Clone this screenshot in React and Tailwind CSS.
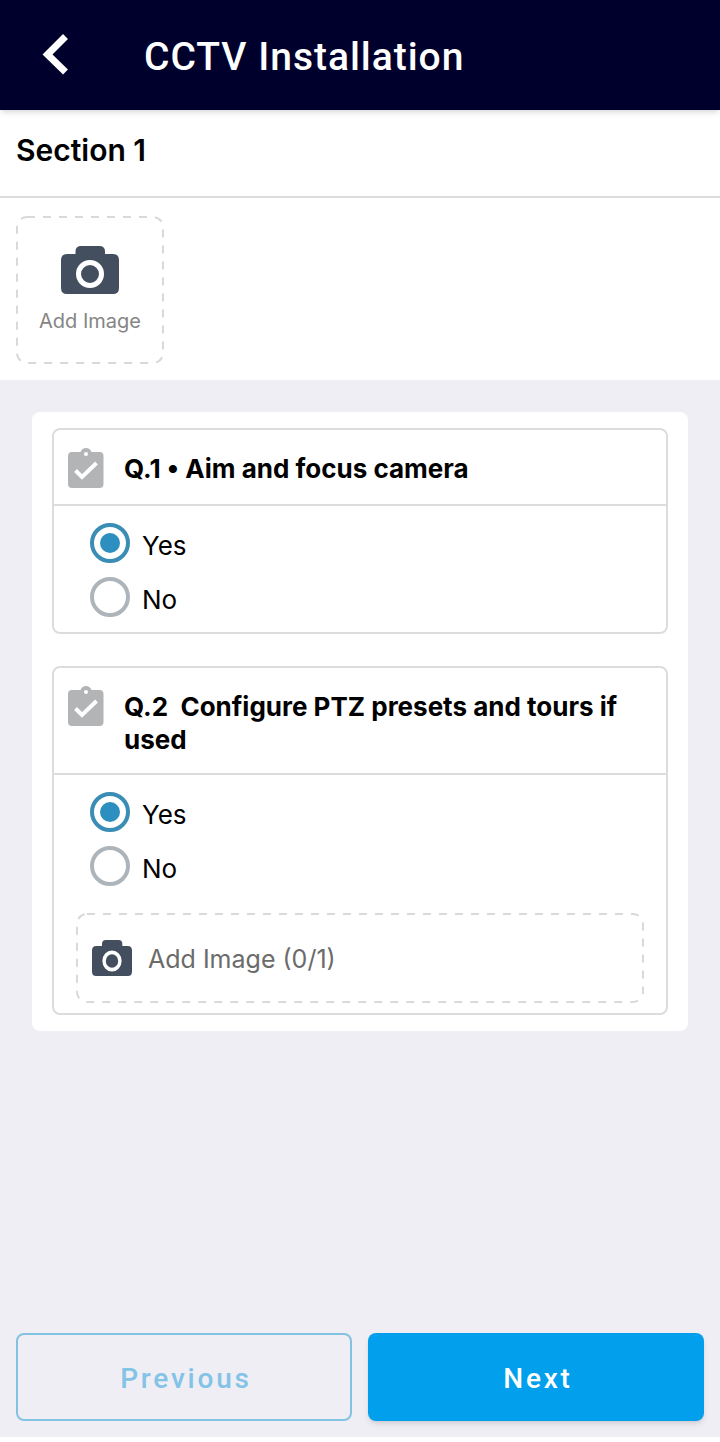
import { useState } from "react";

const questions = [
    { id: "q1", title: "Q.1 • Aim and focus camera", maxImages: 0 },
    { id: "q2", title: "Q.2  Configure PTZ presets and tours if used", maxImages: 1 },
];

function CameraIcon({ className }) {
    return (
        <svg viewBox="0 0 58 48" preserveAspectRatio="none" className={className} aria-hidden="true">
            <path
                fill="#434f5f"
                d="M6 8h8.500V5.500Q14.500 0 20 0h18.500Q44 0 44 5.500V8h8q6 0 6 6v28q0 6-6 6H6q-6 0-6-6V14q0-6 6-6Z"
            />
            <circle cx="29" cy="28" r="11.500" fill="none" stroke="#fff" strokeWidth="5" />
        </svg>
    );
}

function ClipboardIcon() {
    return (
        <svg viewBox="0 0 36 42" className="w-9 h-[42px] shrink-0" aria-hidden="true">
            <path fill="#b2b4b6" d="M4 6h8.500C13.500 3.500 15.500 2 18 2s4.500 1.500 5.500 4H31.500q4 0 4 4v28q0 4-4 4H4q-4 0-4-4V10q0-4 4-4Z" />
            <circle cx="18" cy="8" r="2" fill="#fff" />
            <path fill="none" stroke="#fff" strokeWidth="4" d="m7.500 24.500 6.500 6.500L28.500 17" />
        </svg>
    );
}

function DashedOutline() {
    return (
        <svg className="absolute inset-0 size-full p-px overflow-visible pointer-events-none" aria-hidden="true">
            <rect width="100%" height="100%" rx="10" fill="none" stroke="#d9d9d9" strokeWidth="2" strokeDasharray="8 8" />
        </svg>
    );
}

function Option({ name, value, checked, onChange }) {
    return (
        <label className="flex items-center gap-3 h-[54px]">
            <input
                type="radio"
                name={name}
                value={value}
                checked={checked}
                onChange={onChange}
                className="appearance-none grid place-items-center size-10 rounded-full border-4 border-[#adb5bb] checked:border-[#3a8db5] checked:before:block checked:before:size-5 checked:before:rounded-full checked:before:bg-[#2d8fbf]"
            />
            <span className="pt-1 text-[26px]">{value}</span>
        </label>
    );
}

function Question({ question }) {
    const [answer, setAnswer] = useState("Yes");

    return (
        <section className="border-2 border-[#dcdcdc] rounded-lg">
            <div className="flex items-start gap-5 px-3.5 py-4 border-b-2 border-[#dcdcdc]">
                <ClipboardIcon />
                <h2 className="pt-1.5 pb-px text-[26px] leading-[33px] font-bold whitespace-pre-wrap">{question.title}</h2>
            </div>
            <div className="pt-2.5 pb-2 pl-9">
                {["Yes", "No"].map((value) => (
                    <Option key={value} name={question.id} value={value} checked={answer === value} onChange={() => setAnswer(value)} />
                ))}
            </div>
            {question.maxImages > 0 && (
                <div className="px-[22px] pt-3 pb-2.5">
                    <button type="button" className="relative flex items-center gap-4 w-full h-[90px] px-4 text-[25px] text-[#6b6b6b]">
                        <DashedOutline />
                        <CameraIcon className="w-10 h-9" />
                        <span className="pt-1">Add Image (0/{question.maxImages})</span>
                    </button>
                </div>
            )}
        </section>
    );
}

export default function App() {
    return (
        <div className="flex flex-col min-h-screen bg-[#efeef5] border-b-[5px] border-white font-['Inter',sans-serif] text-black">
            <header className="relative flex items-center h-[110px] px-8 gap-16 bg-[#00002d] text-white shadow-md">
                <button type="button" aria-label="Back" className="size-12 shrink-0">
                    <svg viewBox="0 0 48 48" className="size-full" aria-hidden="true">
                        <path fill="none" stroke="currentColor" strokeWidth="7" d="M33.500 5.500 15.500 23.500l18 17.500" />
                    </svg>
                </button>
                <h1 className="pt-1 font-['Roboto',sans-serif] text-[39px] font-medium tracking-wide">CCTV Installation</h1>
            </header>

            <div className="h-[88px] px-4 pt-5 bg-white border-b-2 border-[#dcdcdc]">
                <h2 className="text-[30px] leading-10 font-semibold">Section 1</h2>
            </div>
            <div className="px-4 pt-[18px] pb-4 bg-white">
                <button type="button" className="relative flex flex-col items-center gap-3 size-[148px] pt-[30px] text-[20px] leading-[30px] text-[#858585]">
                    <DashedOutline />
                    <CameraIcon className="w-[58px] h-12" />
                    <span>Add Image</span>
                </button>
            </div>

            <main className="flex-1 p-8">
                <div className="flex flex-col gap-8 px-5 py-4 bg-white rounded-lg">
                    {questions.map((question) => (
                        <Question key={question.id} question={question} />
                    ))}
                </div>
            </main>

            <footer className="grid grid-cols-2 gap-4 p-4 font-['Roboto',sans-serif] text-[28px] font-medium tracking-widest">
                <button type="button" className="h-[88px] pt-1 pl-1 border-2 border-[#82c3e2] rounded-lg text-[#82c3e6]">
                    Previous
                </button>
                <button type="button" className="h-[88px] pt-1 pl-1 bg-[#02a0ec] rounded-lg text-white shadow-md">
                    Next
                </button>
            </footer>
        </div>
    );
}
